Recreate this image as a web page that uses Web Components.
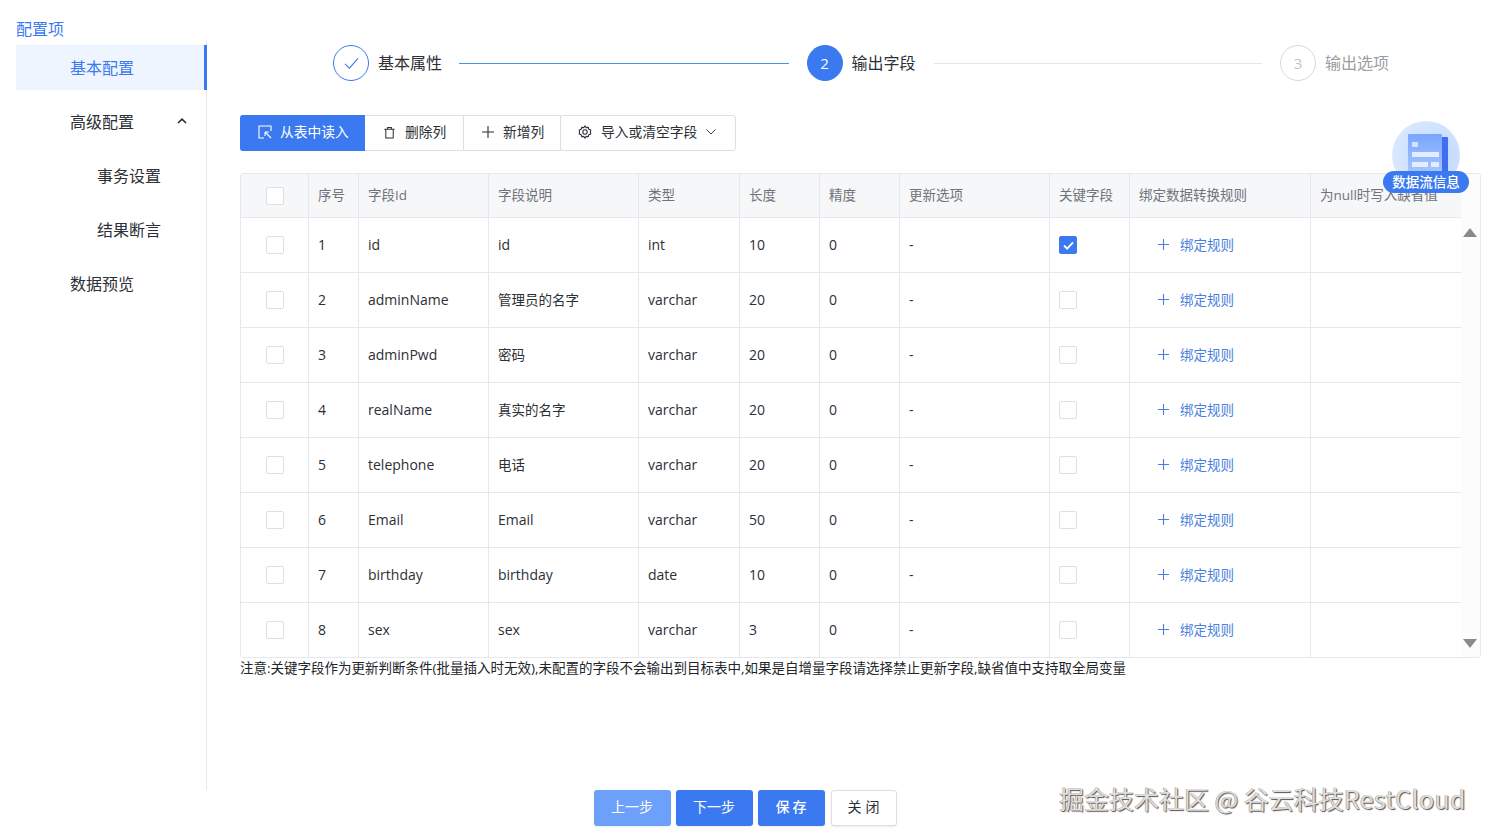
<!DOCTYPE html>
<html lang="zh">
<head>
<meta charset="utf-8">
<title>输出字段</title>
<style>
  html, body { margin: 0; background: #fff; }
  body {
    font-family: "Open Sans", "Noto Sans CJK SC", sans-serif;
    font-size: 13.5px;
    color: #2b2f36;
    --blue: #3b79f0;
    --line: #e6e8ec;
    --cols: 68px 50px 130px 150px 101px 80px 80px 150px 80px 181px 150px;
  }
</style>
</head>
<body>
<app-shell>
  <side-menu slot="side" heading="配置项">
    <menu-item active>基本配置</menu-item>
    <menu-item caret>高级配置</menu-item>
    <menu-item sub>事务设置</menu-item>
    <menu-item sub>结果断言</menu-item>
    <menu-item>数据预览</menu-item>
  </side-menu>

  <step-bar>
    <step-item state="done" num="1">基本属性</step-item>
    <step-item state="now" num="2">输出字段</step-item>
    <step-item state="todo" num="3">输出选项</step-item>
  </step-bar>

  <tool-bar></tool-bar>

  <field-table>
    <field-row n="1" fid="id" info="id" type="int" len="10" key></field-row>
    <field-row n="2" fid="adminName" info="管理员的名字" type="varchar" len="20"></field-row>
    <field-row n="3" fid="adminPwd" info="密码" type="varchar" len="20"></field-row>
    <field-row n="4" fid="realName" info="真实的名字" type="varchar" len="20"></field-row>
    <field-row n="5" fid="telephone" info="电话" type="varchar" len="20"></field-row>
    <field-row n="6" fid="Email" info="Email" type="varchar" len="50"></field-row>
    <field-row n="7" fid="birthday" info="birthday" type="date" len="10"></field-row>
    <field-row n="8" fid="sex" info="sex" type="varchar" len="3"></field-row>
  </field-table>

  <note-line>注意:关键字段作为更新判断条件(批量插入时无效),未配置的字段不会输出到目标表中,如果是自增量字段请选择禁止更新字段,缺省值中支持取全局变量</note-line>

  <foot-bar slot="foot"></foot-bar>
  <data-badge slot="over"></data-badge>
  <water-mark slot="over">掘金技术社区 @ 谷云科技<span style="letter-spacing:.35px">RestCloud</span></water-mark>
</app-shell>

<script>
  // small helper, every element here is just a shadow root with a style and some markup
  function shadow(el, html) {
    el.attachShadow({ mode: "open" }).innerHTML = html;
  }

  customElements.define("app-shell", class extends HTMLElement {
    constructor() {
      super();
      shadow(this, `
        <style>
          :host { display: grid; grid-template-columns: 207px 1fr; grid-template-rows: 790px 48px; width: 1490px; height: 838px; position: relative; overflow: hidden; }
          main { padding: 45px 9px 0 33px; min-width: 0; }
          .foot { grid-column: 1 / 3; }
        </style>
        <slot name="side"></slot>
        <main><slot></slot></main>
        <div class="foot"><slot name="foot"></slot></div>
        <slot name="over"></slot>`);
    }
  });

  customElements.define("side-menu", class extends HTMLElement {
    constructor() {
      super();
      shadow(this, `
        <style>
          :host { display: flex; flex-direction: column; padding: 19px 0 0 16px; box-sizing: border-box; height: 790px; }
          h4 { margin: 0 0 1px; font-weight: 400; font-size: 16px; line-height: 20px; color: var(--blue); }
          nav { flex: 1; border-right: 1px solid var(--line); padding-top: 5px; display: flex; flex-direction: column; gap: 9px; }
        </style>
        <h4>${this.getAttribute("heading")}</h4>
        <nav><slot></slot></nav>`);
    }
  });

  customElements.define("menu-item", class extends HTMLElement {
    constructor() {
      super();
      const caret = this.hasAttribute("caret")
        ? `<svg viewBox="0 0 10 6" width="10" height="6"><path d="M1 5 5 1.2 9 5" fill="none" stroke="#2b2f36" stroke-width="1.7"/></svg>` : "";
      shadow(this, `
        <style>
          :host { display: flex; align-items: center; justify-content: space-between; height: 45px; padding: 0 20px 0 54px; margin-right: -1px; font-size: 16px; color: #2b2f36; box-sizing: border-box; }
          :host([sub]) { padding-left: 81px; }
          :host([active]) { background: #eef5ff; color: var(--blue); border-right: 3px solid var(--blue); }
          span { padding-bottom: 2px; }
          svg { margin-bottom: 2px; }
        </style>
        <span><slot></slot></span>${caret}`);
    }
  });

  customElements.define("step-bar", class extends HTMLElement {
    constructor() {
      super();
      shadow(this, `
        <style>:host { display: flex; padding: 0 92px 0 93px; gap: 18px; margin-bottom: 34px; }</style>
        <slot></slot>`);
    }
  });

  customElements.define("step-item", class extends HTMLElement {
    constructor() {
      super();
      const state = this.getAttribute("state");
      const mark = state === "done"
        ? `<svg viewBox="0 0 16 14" width="15" height="13"><path d="M1 7.5 5.8 12 15 1.5" fill="none" stroke="#3b79f0" stroke-width="1.1"/></svg>`
        : this.getAttribute("num");
      shadow(this, `
        <style>
          :host { display: flex; align-items: center; gap: 9px; flex: 1; font-size: 16px; color: #2b2f36; }
          :host([state="todo"]) { flex: none; color: #9a9da3; }
          .dot { width: 36px; height: 36px; border-radius: 50%; box-sizing: border-box; display: flex; align-items: center; justify-content: center; border: 1px solid var(--blue); font-size: 15px; flex: none; }
          :host([state="now"]) .dot { background: var(--blue); color: #fff; }
          :host([state="todo"]) .dot { border-color: #d6d8dc; color: #c2c4c8; }
          span { padding-bottom: 2px; }
          .bar { flex: 1; height: 1px; background: #e3e5e9; margin-left: 9px; }
          :host([state="done"]) .bar { background: #4f8fe6; margin-left: 8px; }
          :host([state="todo"]) .bar { display: none; }
        </style>
        <div class="dot">${mark}</div><span><slot></slot></span><div class="bar"></div>`);
    }
  });

  customElements.define("tool-bar", class extends HTMLElement {
    constructor() {
      super();
      shadow(this, `
        <style>
          :host { display: flex; height: 36px; margin-bottom: 22px; }
          button { all: unset; box-sizing: border-box; height: 36px; padding-bottom: 4px; display: flex; align-items: center; gap: 8px; border: 1px solid #dcdfe4; border-left: 0; font-size: 13.75px; color: #2b2f36; background: #fff; }
          .read { background: var(--blue); border-color: var(--blue); color: #fff; border-radius: 3px 0 0 3px; width: 125px; padding-left: 18px; }
          .del { width: 99px; padding-left: 18px; gap: 9px; }
          .add { width: 97px; padding-left: 18px; gap: 9px; }
          .imp { padding-left: 17px; gap: 9px; border-radius: 3px; margin-left: -1px; width: 176px; border-left: 1px solid #dcdfe4; }
          svg { flex: none; fill: none; stroke: currentColor; stroke-width: 1.1; margin-top: 2px; }
        </style>
        <button class="read">
          <svg viewBox="0 0 14 14" width="14" height="14"><path d="M13 6V1H1v12h5"/><path d="M7 7l6 6M7 7h4M7 7v4"/></svg>从表中读入</button>
        <button class="del">
          <svg viewBox="0 0 14 14" width="13" height="13"><path d="M3 4v9h8V4M1.5 3.5h11M5 3.5V1.5h4v2"/></svg>删除列</button>
        <button class="add">
          <svg viewBox="0 0 12 12" width="12" height="12"><path d="M6 0v12M0 6h12"/></svg>新增列</button>
        <button class="imp">
          <svg viewBox="0 0 14 14" width="14" height="14"><path d="M7 1l1.2 1.6 2-.2.7 1.9 1.9.8-.4 1.9.4 1.9-1.9.8-.7 1.9-2-.2L7 13l-1.2-1.6-2 .2-.7-1.9-1.9-.8.4-1.9-.4-1.9 1.9-.8.7-1.9 2 .2z"/><circle cx="7" cy="7" r="2.2"/></svg>
          导入或清空字段
          <svg viewBox="0 0 10 6" width="10" height="6" style="stroke-width:.9"><path d="M.5 .5l4.5 4.5 4.5-4.5"/></svg></button>`);
    }
  });

  customElements.define("field-table", class extends HTMLElement {
    constructor() {
      super();
      const heads = ["", "序号", "字段Id", "字段说明", "类型", "长度", "精度", "更新选项", "关键字段", "绑定数据转换规则", "为null时写入缺省值"];
      const cells = heads.map((h, i) => `<div class="th">${i ? `<span>${h}</span>` : "<i></i>"}</div>`).join("");
      shadow(this, `
        <style>
          :host { display: block; width: 1241px; height: 485px; box-sizing: border-box; border: 1px solid var(--line); border-radius: 3px; position: relative; background: linear-gradient(to left, #fcfcfc 19px, #fff 19px); }
          .head { display: grid; grid-template-columns: var(--cols); width: 1220px; height: 43px; background: #f6f7f9; border-bottom: 1px solid var(--line); }
          .th { display: flex; align-items: center; padding-left: 9px; border-right: 1px solid var(--line); color: #6f737a; font-size: 13.5px; white-space: nowrap; overflow: hidden; }
          .th:first-of-type { padding-left: 25px; }
          .th:last-child { border-right: 0; }
          span { padding-bottom: 4px; }
          i { width: 18px; height: 18px; box-sizing: border-box; border: 1px solid #dcdfe4; border-radius: 2px; background: #fff; }
          .up, .down { position: absolute; right: 3px; width: 0; height: 0; border-left: 7px solid transparent; border-right: 7px solid transparent; }
          .up { top: 54px; border-bottom: 9px solid #8a8a8a; }
          .down { bottom: 9px; border-top: 9px solid #8a8a8a; }
        </style>
        <div class="head">${cells}</div>
        <slot></slot>
        <div class="up"></div><div class="down"></div>`);
    }
  });

  customElements.define("field-row", class extends HTMLElement {
    constructor() {
      super();
      const a = name => this.getAttribute(name);
      const on = this.hasAttribute("key");
      const info = a("info");
      const zh = /[^\x00-\x7f]/.test(info) ? "zh" : "";
      shadow(this, `
        <style>
          :host { display: grid; grid-template-columns: var(--cols); width: 1220px; height: 55px; box-sizing: border-box; border-bottom: 1px solid var(--line); font-size: 14px; color: #2b2f36; background: #fff; }
          :host(:last-child) { border-bottom: 0; height: 54px; }
          div { display: flex; align-items: center; padding: 0 0 2px 9px; border-right: 1px solid var(--line); white-space: nowrap; }
          div.box { padding-bottom: 0; }
          div.box.first { padding-left: 25px; }
          div:last-child { border-right: 0; }
          .zh { font-size: 13.5px; }
          i { width: 18px; height: 18px; box-sizing: border-box; border: 1px solid #dcdfe4; border-radius: 2px; display: flex; align-items: center; justify-content: center; }
          i.on { background: var(--blue); border-color: var(--blue); }
          .rule { padding-left: 28px; gap: 11px; color: #4a7fe0; font-size: 13.5px; }
        </style>
        <div class="box first"><i></i></div>
        <div>${a("n")}</div>
        <div>${a("fid")}</div>
        <div class="${zh}">${info}</div>
        <div>${a("type")}</div>
        <div>${a("len")}</div>
        <div>0</div>
        <div>-</div>
        <div class="box"><i class="${on ? "on" : ""}">${on ? '<svg viewBox="0 0 12 10" width="11" height="9"><path d="M1 5l3.5 3.5L11 1.5" fill="none" stroke="#fff" stroke-width="2"/></svg>' : ""}</i></div>
        <div class="rule"><svg viewBox="0 0 11 11" width="11" height="11"><path d="M5.5 0v11M0 5.5h11" stroke="#4a7fe0" stroke-width="1.1"/></svg>绑定规则</div>
        <div></div>`);
    }
  });

  customElements.define("note-line", class extends HTMLElement {
    constructor() {
      super();
      shadow(this, `
        <style>:host { display: block; font-size: 13.5px; line-height: 20px; color: #22252a; white-space: nowrap; }</style>
        <slot></slot>`);
    }
  });

  customElements.define("foot-bar", class extends HTMLElement {
    constructor() {
      super();
      shadow(this, `
        <style>
          :host { display: flex; justify-content: center; align-items: flex-start; }
          button { all: unset; box-sizing: border-box; height: 36px; padding-bottom: 4px; border-radius: 3px; display: flex; align-items: center; justify-content: center; background: var(--blue); color: #fff; font-size: 14px; box-shadow: 0 1px 2px rgba(0,0,0,.08); }
          .step { width: 77px; margin-right: 5px; }
          .prev { background: #6ca0fb; }
          .save { width: 67px; margin-right: 6px; letter-spacing: 3px; text-indent: 3px; font-weight: 500; }
          .close { width: 66px; background: #fff; color: #2b2f36; border: 1px solid #dcdfe4; letter-spacing: 4px; text-indent: 4px; }
        </style>
        <button class="step prev">上一步</button>
        <button class="step">下一步</button>
        <button class="save">保存</button>
        <button class="close">关闭</button>`);
    }
  });

  customElements.define("data-badge", class extends HTMLElement {
    constructor() {
      super();
      shadow(this, `
        <style>
          :host { position: absolute; left: 1383px; top: 121px; width: 86px; height: 72px; display: block; }
          .ball { position: absolute; left: 9px; top: 0; width: 68px; height: 68px; border-radius: 50%; background: radial-gradient(circle at 65% 55%, #bcd6ff, #d9e8ff 75%, #e4eeff); }
          svg { position: absolute; left: 24px; top: 12px; }
          .pill { position: absolute; left: 0; bottom: 0; width: 86px; height: 22px; padding-bottom: 2px; box-sizing: border-box; border-radius: 11px; background: var(--blue); color: #fff; font-size: 13.5px; font-weight: 500; display: flex; align-items: center; justify-content: center; white-space: nowrap; }
        </style>
        <div class="ball"></div>
        <svg viewBox="0 0 42 44" width="42" height="44">
          <defs><linearGradient id="d" x1="0" y1="0" x2="0" y2="1"><stop offset="0" stop-color="#7aa6ff"/><stop offset="1" stop-color="#a9c8ff"/></linearGradient></defs>
          <rect x="34" y="4" width="7" height="36" rx="1" fill="#3f6ff0"/>
          <rect x="1" y="1" width="34" height="43" rx="1" fill="url(#d)"/>
          <rect x="5" y="9" width="6" height="5" fill="#d3e2ff"/>
          <rect x="5" y="19" width="27" height="5" fill="#e3edff"/>
          <rect x="5" y="29" width="16" height="5" fill="#e3edff"/>
          <rect x="24" y="29" width="8" height="5" fill="#e3edff"/>
        </svg>
        <div class="pill">数据流信息</div>`);
    }
  });

  customElements.define("water-mark", class extends HTMLElement {
    constructor() {
      super();
      shadow(this, `
        <style>
          :host { position: absolute; left: 1059px; top: 781px; display: block; font-family: "Noto Sans CJK SC", sans-serif; font-size: 25px; line-height: 34px; white-space: nowrap; color: #dedede; text-shadow: 1px 1px 1px #555, -.5px -.5px .5px #999; }
        </style>
        <slot></slot>`);
    }
  });
</script>
</body>
</html>
